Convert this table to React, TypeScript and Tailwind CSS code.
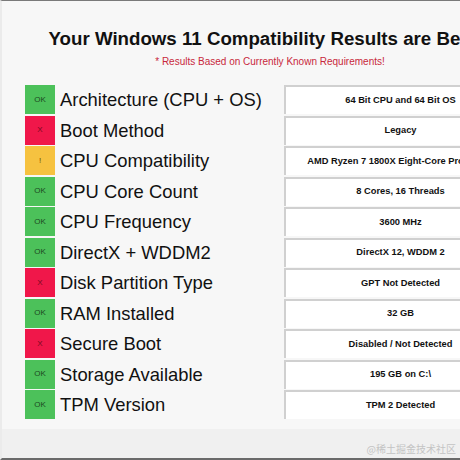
import React from "react";

type Row = { status: "ok" | "x" | "warn"; label: string; value: string };

const rows: Row[] = [
  { status: "ok", label: "Architecture (CPU + OS)", value: "64 Bit CPU and 64 Bit OS" },
  { status: "x", label: "Boot Method", value: "Legacy" },
  { status: "warn", label: "CPU Compatibility", value: "AMD Ryzen 7 1800X Eight-Core Processor" },
  { status: "ok", label: "CPU Core Count", value: "8 Cores, 16 Threads" },
  { status: "ok", label: "CPU Frequency", value: "3600 MHz" },
  { status: "ok", label: "DirectX + WDDM2", value: "DirectX 12, WDDM 2" },
  { status: "x", label: "Disk Partition Type", value: "GPT Not Detected" },
  { status: "ok", label: "RAM Installed", value: "32 GB" },
  { status: "x", label: "Secure Boot", value: "Disabled / Not Detected" },
  { status: "ok", label: "Storage Available", value: "195 GB on C:\\" },
  { status: "ok", label: "TPM Version", value: "TPM 2 Detected" },
];

function Badge({ status }: { status: Row["status"] }) {
  if (status === "ok")
    return (
      <div className="w-[30px] h-[29px] shrink-0 bg-[#4cc15a] text-[#1d4a22] text-[8px] flex items-center justify-center">OK</div>
    );
  if (status === "x")
    return (
      <div className="w-[30px] h-[29px] shrink-0 bg-[#f0174a] text-[#7a0a20] text-[8px] flex items-center justify-center">X</div>
    );
  return (
    <div className="w-[30px] h-[29px] shrink-0 bg-[#f6c240] text-[#6b4a00] text-[8px] flex items-center justify-center">!</div>
  );
}

export default function App() {
  return (
    <div className="w-[460px] h-[460px] overflow-hidden bg-[#f7f7f7] border-t border-t-[#7a7a7a] border-l-2 border-l-[#ebebeb] border-b-2 border-b-[#6a6a6a] flex flex-col" style={{ fontFamily: '"Liberation Sans", Arial, sans-serif' }}>
      <div className="w-[536px] shrink-0 flex flex-col items-center h-[428px]">
        <div className="mt-[26px] text-[18.7px] font-bold text-[#111] leading-[23px] whitespace-nowrap">
          Your Windows 11 Compatibility Results are Below
        </div>
        <div className="mt-[5px] text-[10px] text-[#c8283c] leading-[14px] whitespace-nowrap">
          * Results Based on Currently Known Requirements!
        </div>
        <div className="mt-[16px] w-[490px] flex flex-col gap-[1.5px]">
          {rows.map((r) => (
            <div key={r.label} className="flex h-[29px] items-stretch">
              <Badge status={r.status} />
              <div className="w-[229px] shrink-0 pl-[5px] text-[18.4px] text-[#111] leading-[29px] whitespace-nowrap">{r.label}</div>
              <div className="w-[231px] shrink-0 bg-white border-t-2 border-l-2 border-[#d0d0d0] flex items-center justify-center text-[9.3px] font-bold text-[#111] whitespace-nowrap overflow-hidden">
                {r.value}
              </div>
            </div>
          ))}
        </div>
      </div>
      <div className="flex-1 bg-[#f0f0f0] flex items-end justify-end pr-[4px] pb-[2px]">
        <span className="text-[10px] text-[#c4c4c4]" style={{ fontFamily: '"Noto Sans CJK SC", sans-serif' }}>@稀土掘金技术社区</span>
      </div>
    </div>
  );
}
